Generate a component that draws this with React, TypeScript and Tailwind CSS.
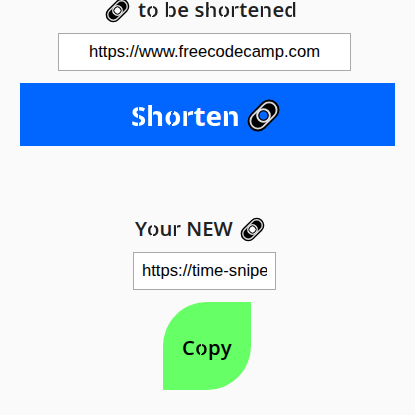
function LinkIcon({ className }: { className: string }) {
  return (
    <svg viewBox="0 0 32 32" className={className} aria-hidden="true">
      <g transform="rotate(-45 16 16)">
        <path
          fillRule="evenodd"
          d="M7.7 5.4H24.3A10.6 10.6 0 0 1 24.3 26.6H7.7A10.6 10.6 0 0 1 7.7 5.4ZM16 11.4A4.6 4.6 0 1 0 16 20.6A4.6 4.6 0 1 0 16 11.4Z"
          fill="#000"
        />
        <rect x="0.1" y="8.2" width="31.8" height="15.6" rx="7.8" fill="none" stroke="#d8d8d8" strokeWidth="1.9" />
        <circle cx="16" cy="16" r="6.4" fill="none" stroke="#e2e2e2" strokeWidth="2.3" />
        <circle cx="16" cy="16" r="4.8" fill="none" stroke="#000" strokeWidth="1" />
      </g>
    </svg>
  );
}

const cuts: Record<string, string> = {
  o: "bg-[linear-gradient(95deg,currentColor_44%,transparent_44%,transparent_54%,currentColor_54%)]",
  b: "bg-[linear-gradient(90deg,currentColor_31%,transparent_31%,transparent_38%,currentColor_38%)]",
  d: "bg-[linear-gradient(90deg,currentColor_62%,transparent_62%,transparent_69%,currentColor_69%)]",
  h: "bg-[linear-gradient(90deg,currentColor_31%,transparent_31%,transparent_38%,currentColor_38%)]",
  n: "bg-[linear-gradient(90deg,currentColor_31%,transparent_31%,transparent_38%,currentColor_38%)]",
  r: "bg-[linear-gradient(90deg,currentColor_43%,transparent_43%,transparent_52%,currentColor_52%)]",
  S: "bg-[linear-gradient(90deg,currentColor_44%,transparent_44%,transparent_52%,currentColor_52%)]",
};

function Stencil({ text, className }: { text: string; className: string }) {
  return (
    <span className={className}>
      {[...text].map((letter, i) =>
        cuts[letter] ? (
          <span key={i} className={`${cuts[letter]} bg-clip-text [-webkit-text-fill-color:transparent]`}>
            {letter}
          </span>
        ) : (
          letter
        ),
      )}
    </span>
  );
}

export default function App() {
  return (
    <main className="flex h-[415px] w-[415px] flex-col overflow-hidden bg-[#fafafa] px-5 font-['Open_Sans',sans-serif] text-[#202020]">
      <div className="flex h-6 items-center pl-[86px]">
        <LinkIcon className="-mt-1 h-[23px] w-[23px] shrink-0 overflow-visible" />
        <Stencil text="to be shortened" className="-mt-[6px] ml-[9px] text-[20.3px] font-semibold leading-5 tracking-[0.2px] whitespace-nowrap" />
      </div>
      <input
        aria-label="URL"
        defaultValue="https://www.freecodecamp.com"
        className="mt-[9px] ml-[38px] h-[38px] w-[293px] shrink-0 border border-[#a9a9a9] bg-white text-center font-['Liberation_Sans',sans-serif] text-[16.64px] text-black outline-none"
      />
      <button className="mt-3 flex h-[63px] w-[375px] shrink-0 items-center bg-[#0066ff] pl-[111px] text-white">
        <Stencil text="Shorten" className="w-[107px] text-left text-[27.6px] font-bold leading-10 tracking-[-0.1px] whitespace-nowrap" />
        <LinkIcon className="mt-[2px] ml-[10px] h-[31px] w-[31px] shrink-0 overflow-visible" />
      </button>
      <div className="mt-[69px] flex h-7 shrink-0 items-center pl-[115px]">
        <Stencil text="Your NEW" className="-mt-[2px] w-[98px] text-[20.3px] font-semibold leading-7 tracking-[0px] whitespace-nowrap" />
        <LinkIcon className="ml-2 h-[23px] w-[23px] shrink-0 overflow-visible" />
      </div>
      <input
        aria-label="Short URL"
        defaultValue="https://time-snipe"
        className="mt-[9px] ml-[113px] h-[38px] w-[143px] shrink-0 border border-[#a9a9a9] bg-white px-2 font-['Liberation_Sans',sans-serif] text-[16.64px] text-black outline-none"
      />
      <button className="mt-3 ml-[143px] flex h-[88px] w-[88px] shrink-0 items-center justify-center rounded-tl-[44px] rounded-br-[44px] bg-[#66ff66] text-black">
        <Stencil text="Copy" className="mt-[2px] text-[20.3px] font-semibold tracking-[0.3px]" />
      </button>
    </main>
  );
}
